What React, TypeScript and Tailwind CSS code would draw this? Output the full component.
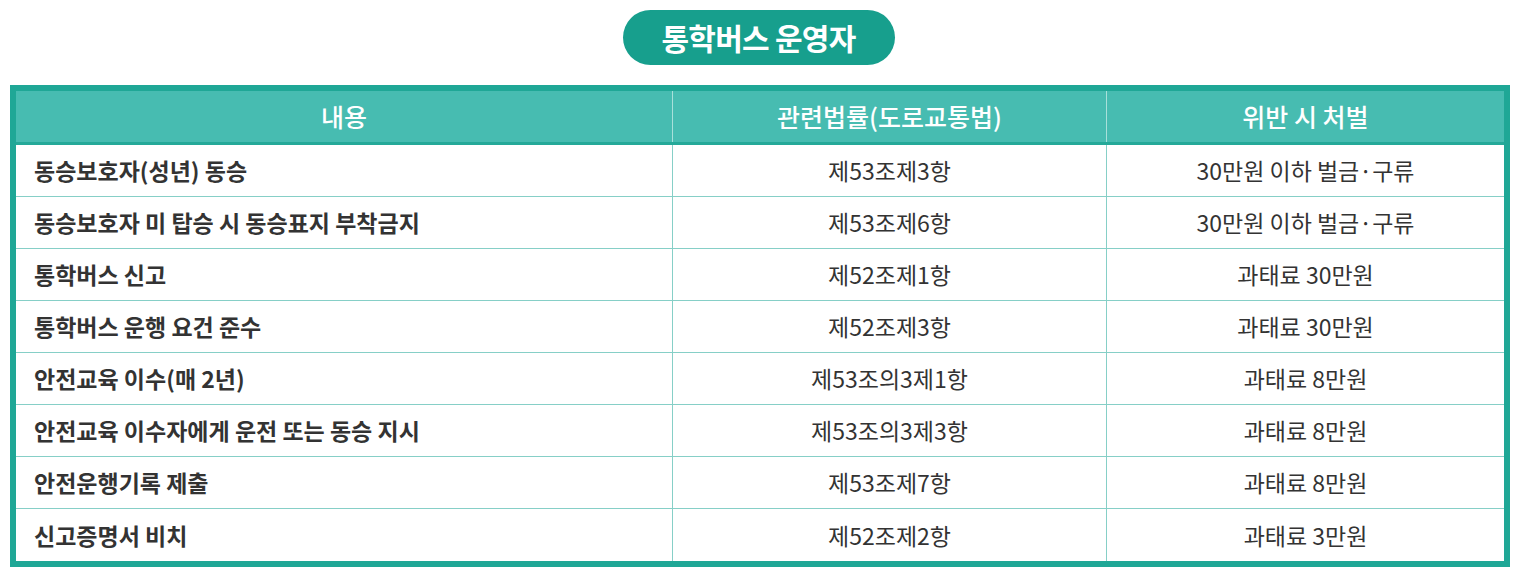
const rows = [
  ["동승보호자(성년) 동승", "제53조제3항", "30만원 이하 벌금·구류"],
  ["동승보호자 미 탑승 시 동승표지 부착금지", "제53조제6항", "30만원 이하 벌금·구류"],
  ["통학버스 신고", "제52조제1항", "과태료 30만원"],
  ["통학버스 운행 요건 준수", "제52조제3항", "과태료 30만원"],
  ["안전교육 이수(매 2년)", "제53조의3제1항", "과태료 8만원"],
  ["안전교육 이수자에게 운전 또는 동승 지시", "제53조의3제3항", "과태료 8만원"],
  ["안전운행기록 제출", "제53조제7항", "과태료 8만원"],
  ["신고증명서 비치", "제52조제2항", "과태료 3만원"],
];

const font = { fontFamily: '"Noto Sans CJK KR", "Noto Sans", sans-serif' };

const App = () => {
  return (
    <div className="min-h-[577px] w-[1517px] bg-white pt-[10px]" style={font}>
      <div className="flex justify-center">
        <div className="flex h-[55px] w-[272px] items-center justify-center rounded-full bg-[#179f8d] text-[30px] font-bold tracking-tight text-white">
          통학버스 운영자
        </div>
      </div>

      <div className="mx-[10px] mt-[20px] w-[1500px] border-[6px] border-[#1fa796]">
        <div className="grid h-[54px] grid-cols-[657px_434px_1fr] border-b-[3px] border-[#25a999] bg-[#47bcb1] text-[25px] font-medium text-white">
          <div className="flex items-center justify-center border-r border-[#a8e0da]">내용</div>
          <div className="flex items-center justify-center border-r border-[#a8e0da]">관련법률(도로교통법)</div>
          <div className="flex items-center justify-center">위반 시 처벌</div>
        </div>
        {rows.map((r, i) => (
          <div
            key={i}
            className={
              "grid h-[52px] grid-cols-[657px_434px_1fr] text-[23px] text-[#333333] " +
              (i < rows.length - 1 ? "border-b border-[#86cfc7]" : "")
            }
          >
            <div className="flex items-center border-r border-[#86cfc7] pl-[18px] font-bold">{r[0]}</div>
            <div className="flex items-center justify-center border-r border-[#86cfc7]">{r[1]}</div>
            <div className="flex items-center justify-center">{r[2]}</div>
          </div>
        ))}
      </div>
    </div>
  );
};

export default App;
